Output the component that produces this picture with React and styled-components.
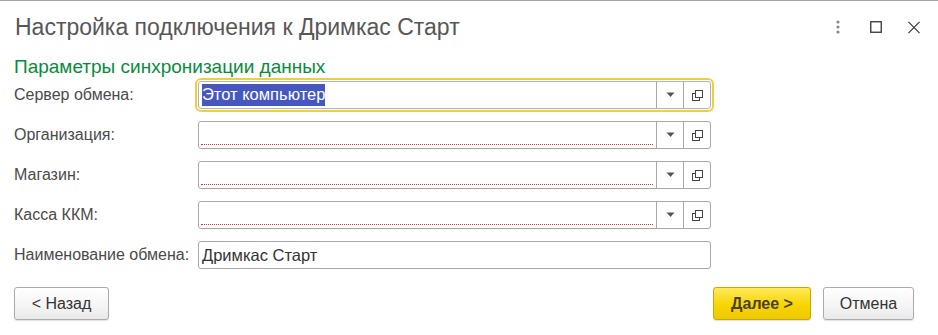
import React from "react"
import styled, { createGlobalStyle } from "styled-components"

const Global = createGlobalStyle`
  body {
    margin: 0;
    background: #fff;
    font-family: Arial, "Liberation Sans", sans-serif;
  }
`

const Window = styled.div`
  width: 938px;
  height: 335px;
  box-sizing: border-box;
  border-top: 1px solid #a3a3a3;
  padding: 0 14px;
  display: flex;
  flex-direction: column;
`

const TitleBar = styled.div`
  height: 52px;
  display: flex;
  align-items: center;
  padding-left: 1px;
`

const Title = styled.h1`
  margin: 0;
  flex: 1;
  font-weight: normal;
  font-size: 23px;
  color: #575757;
`

const Tools = styled.div`
  display: flex;
  align-items: center;
  gap: 26px;
  margin-right: 4px;
`

const ToolButton = styled.div`
  width: 12px;
  height: 14px;
  display: flex;
  align-items: center;
  justify-content: center;
`

const Section = styled.h2`
  margin: 3px 0 0 0;
  height: 22px;
  line-height: 22px;
  font-weight: normal;
  font-size: 19px;
  color: #0a8a3d;
`

const Form = styled.div`
  margin-top: 3px;
  display: flex;
  flex-direction: column;
  gap: 12px;
`

const Row = styled.div`
  display: flex;
  align-items: center;
  height: 28px;
`

const Label = styled.div`
  width: 184px;
  font-size: 16px;
  color: #4a4a4a;
  white-space: nowrap;
`

const Field = styled.div`
  width: 513px;
  height: 28px;
  box-sizing: border-box;
  border: 1px solid ${p => p.$focused ? "#b5b5b5" : "#a8a8a8"};
  border-radius: 3px;
  display: flex;
  background: #fff;
  outline: ${p => p.$focused ? "2px solid #f2cf3a" : "none"};
  outline-offset: 1px;
`

const Input = styled.div`
  flex: 1;
  position: relative;
  display: flex;
  align-items: center;
  padding-left: 3px;
  font-size: 16.5px;
  color: #333;
`

const Required = styled.div`
  position: absolute;
  left: 2px;
  right: 3px;
  bottom: 3px;
  border-bottom: 1px dotted #c0392b;
`

const Selected = styled.span`
  background: #4658c0;
  color: #fff;
  padding: 1px 0 2px;
`

const SideButton = styled.div`
  width: 26px;
  border-left: 1px solid #a8a8a8;
  display: flex;
  align-items: center;
  justify-content: center;
`

const Footer = styled.div`
  margin-top: 18px;
  display: flex;
  align-items: center;
`

const Button = styled.button`
  height: 33px;
  width: ${p => p.$w}px;
  margin-left: ${p => p.$ml || 0}px;
  box-sizing: border-box;
  border: 1px solid ${p => p.$primary ? "#c9a800" : "#ababab"};
  border-radius: 3px;
  background: ${p => p.$primary
    ? "linear-gradient(#ffea5c, #f8d500 55%, #efc900)"
    : "linear-gradient(#ffffff, #f4f4f4 60%, #e9e9e9)"};
  box-shadow: 0 1px 1px rgba(0,0,0,0.12);
  font-family: Arial, "Liberation Sans", sans-serif;
  font-size: 16px;
  font-weight: ${p => p.$primary ? "bold" : "normal"};
  color: ${p => p.$primary ? "#4a4020" : "#333"};
  padding: 0;
`

const Spacer = styled.div`
  flex: 1;
`

const Arrow = () => (
  <svg width="9" height="6" viewBox="0 0 9 6">
    <path d="M0.5 0.5 H8.5 L4.5 5 Z" fill="#555" />
  </svg>
)

const CopyIcon = () => (
  <svg width="13" height="13" viewBox="0 0 13 13">
    <rect x="1.5" y="4.5" width="7" height="7" fill="none" stroke="#444" />
    <rect x="4.5" y="1.5" width="7" height="7" fill="#fff" stroke="#444" />
  </svg>
)

const rows = [
  { label: "Сервер обмена:", value: "Этот компьютер", focused: true, select: true },
  { label: "Организация:", required: true, select: true },
  { label: "Магазин:", required: true, select: true },
  { label: "Касса ККМ:", required: true, select: true },
  { label: "Наименование обмена:", value: "Дримкас Старт" },
]

export default function App() {
  return (
    <Window>
      <Global />
      <TitleBar>
        <Title>Настройка подключения к Дримкас Старт</Title>
        <Tools>
          <ToolButton>
            <svg width="4" height="14" viewBox="0 0 4 14">
              <circle cx="2" cy="2" r="1.6" fill="#8a8a8a" />
              <circle cx="2" cy="7" r="1.6" fill="#8a8a8a" />
              <circle cx="2" cy="12" r="1.6" fill="#8a8a8a" />
            </svg>
          </ToolButton>
          <ToolButton>
            <svg width="12" height="12" viewBox="0 0 12 12">
              <rect x="0.75" y="0.75" width="10.5" height="10.5" fill="none" stroke="#333" strokeWidth="1.3" />
            </svg>
          </ToolButton>
          <ToolButton>
            <svg width="13" height="13" viewBox="0 0 13 13">
              <path d="M0.5 0.5 L12.5 12.5 M12.5 0.5 L0.5 12.5" stroke="#333" strokeWidth="1.2" />
            </svg>
          </ToolButton>
        </Tools>
      </TitleBar>
      <Section>Параметры синхронизации данных</Section>
      <Form>
        {rows.map(r => (
          <Row key={r.label}>
            <Label>{r.label}</Label>
            <Field $focused={r.focused}>
              <Input>
                {r.focused ? <Selected>{r.value}</Selected> : r.value}
                {r.required && <Required />}
              </Input>
              {r.select && <SideButton><Arrow /></SideButton>}
              {r.select && <SideButton><CopyIcon /></SideButton>}
            </Field>
          </Row>
        ))}
      </Form>
      <Footer>
        <Button $w={95}>&lt; Назад</Button>
        <Spacer />
        <Button $w={98} $primary>Далее &gt;</Button>
        <Button $w={91} $ml={12}>Отмена</Button>
        <div style={{ width: 10 }} />
      </Footer>
    </Window>
  )
}
